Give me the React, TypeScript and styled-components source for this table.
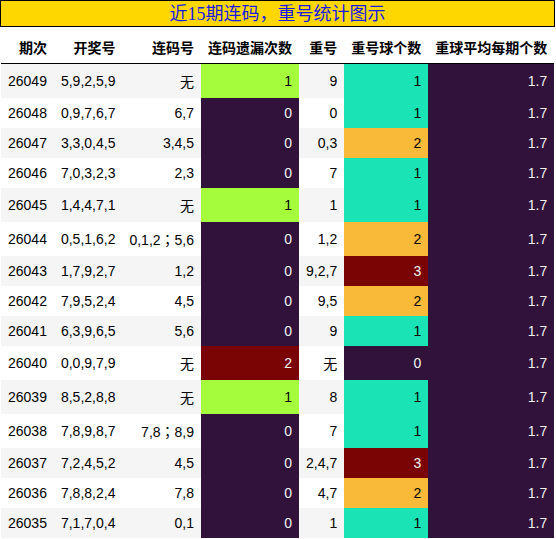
import React from "react";
import styled, { createGlobalStyle } from "styled-components";

const GlobalStyle = createGlobalStyle`
  html, body { margin: 0; padding: 0; background: #ffffff; }
  body { font-family: "Liberation Sans", "Noto Sans CJK SC", sans-serif; }
`;

const Wrapper = styled.div`
  width: 555px;
  font-family: "Liberation Sans", "Noto Sans CJK SC", sans-serif;
`;

const Title = styled.div`
  border: 1px solid #000000;
  background: #ffd700;
  color: #1a1ae6;
  font-family: "Liberation Serif", "Noto Sans CJK SC", serif;
  font-size: 18px;
  line-height: 26px;
  height: 25px;
  text-align: center;
  white-space: nowrap;
  overflow: hidden;
`;

const Table = styled.table`
  border-collapse: collapse;
  margin-left: 1px;
  font-size: 14px;
`;

const Th = styled.th`
  padding: 10px 7px 6px 7px;
  text-align: right;
  font-weight: bold;
  color: #000000;
  border-bottom: 1px solid #000000;
  white-space: nowrap;
`;

const Row = styled.tr`
  background: #ffffff;
  &:nth-child(odd) {
    background: #f5f5f5;
  }
`;

const Td = styled.td<{ $bg?: string; $fg?: string }>`
  padding: 7px;
  text-align: right;
  white-space: nowrap;
  color: ${(p) => p.$fg ?? "#000000"};
  background: ${(p) => p.$bg ?? "transparent"};
`;

const Sep = styled.span`
  font-family: "Noto Sans CJK TC", sans-serif;
`;

const PURPLE = "#30123b";
const TEAL = "#1ae4b6";
const GREEN = "#a4fc3c";
const ORANGE = "#faba39";
const RED = "#7a0403";
const LIGHT = "#f1f1f1";
const DARK = "#000000";

const missScale = [
  { bg: PURPLE, fg: LIGHT },
  { bg: GREEN, fg: DARK },
  { bg: RED, fg: LIGHT },
];
const repeatScale = [
  { bg: PURPLE, fg: LIGHT },
  { bg: TEAL, fg: DARK },
  { bg: ORANGE, fg: DARK },
  { bg: RED, fg: LIGHT },
];

type Rec = [string, string, string, number, string, number];

const data: Rec[] = [
  ["26049", "5,9,2,5,9", "无", 1, "9", 1],
  ["26048", "0,9,7,6,7", "6,7", 0, "0", 1],
  ["26047", "3,3,0,4,5", "3,4,5", 0, "0,3", 2],
  ["26046", "7,0,3,2,3", "2,3", 0, "7", 1],
  ["26045", "1,4,4,7,1", "无", 1, "1", 1],
  ["26044", "0,5,1,6,2", "0,1,2；5,6", 0, "1,2", 2],
  ["26043", "1,7,9,2,7", "1,2", 0, "9,2,7", 3],
  ["26042", "7,9,5,2,4", "4,5", 0, "9,5", 2],
  ["26041", "6,3,9,6,5", "5,6", 0, "9", 1],
  ["26040", "0,0,9,7,9", "无", 2, "无", 0],
  ["26039", "8,5,2,8,8", "无", 1, "8", 1],
  ["26038", "7,8,9,8,7", "7,8；8,9", 0, "7", 1],
  ["26037", "7,2,4,5,2", "4,5", 0, "2,4,7", 3],
  ["26036", "7,8,8,2,4", "7,8", 0, "4,7", 2],
  ["26035", "7,1,7,0,4", "0,1", 0, "1", 1],
];

const headers = ["期次", "开奖号", "连码号", "连码遗漏次数", "重号", "重号球个数", "重球平均每期个数"];

function renderLian(v: string) {
  const parts = v.split("；");
  if (parts.length < 2) return v;
  return (
    <>
      {parts[0]}
      <Sep>；</Sep>
      {parts[1]}
    </>
  );
}

export default function App() {
  return (
    <Wrapper>
      <GlobalStyle />
      <Title>近15期连码，重号统计图示</Title>
      <Table>
        <thead>
          <tr>
            {headers.map((h) => (
              <Th key={h}>{h}</Th>
            ))}
          </tr>
        </thead>
        <tbody>
          {data.map(([issue, draw, lian, miss, chong, cnt]) => (
            <Row key={issue}>
              <Td>{issue}</Td>
              <Td>{draw}</Td>
              <Td>{renderLian(lian)}</Td>
              <Td $bg={missScale[miss].bg} $fg={missScale[miss].fg}>{miss}</Td>
              <Td>{chong}</Td>
              <Td $bg={repeatScale[cnt].bg} $fg={repeatScale[cnt].fg}>{cnt}</Td>
              <Td $bg={PURPLE} $fg={LIGHT}>1.7</Td>
            </Row>
          ))}
        </tbody>
      </Table>
    </Wrapper>
  );
}
